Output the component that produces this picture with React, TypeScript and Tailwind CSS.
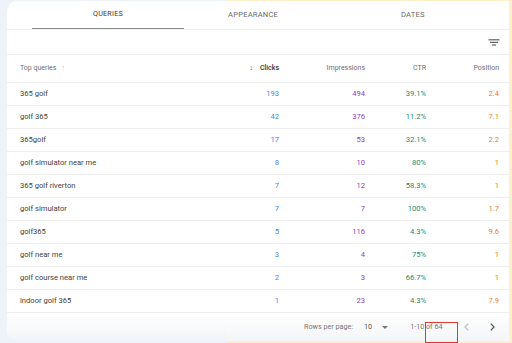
import React from 'react';

interface QueryRow {
  query: string;
  clicks: number;
  impressions: number;
  ctr: string;
  position: string;
}

const rows: QueryRow[] = [
  { query: '365 golf', clicks: 193, impressions: 494, ctr: '39.1%', position: '2.4' },
  { query: 'golf 365', clicks: 42, impressions: 376, ctr: '11.2%', position: '7.1' },
  { query: '365golf', clicks: 17, impressions: 53, ctr: '32.1%', position: '2.2' },
  { query: 'golf simulator near me', clicks: 8, impressions: 10, ctr: '80%', position: '1' },
  { query: '365 golf riverton', clicks: 7, impressions: 12, ctr: '58.3%', position: '1' },
  { query: 'golf simulator', clicks: 7, impressions: 7, ctr: '100%', position: '1.7' },
  { query: 'golf365', clicks: 5, impressions: 116, ctr: '4.3%', position: '9.6' },
  { query: 'golf near me', clicks: 3, impressions: 4, ctr: '75%', position: '1' },
  { query: 'golf course near me', clicks: 2, impressions: 3, ctr: '66.7%', position: '1' },
  { query: 'indoor golf 365', clicks: 1, impressions: 23, ctr: '4.3%', position: '7.9' },
];

const gridCols = 'grid grid-cols-[52px_86px_61px_73px] items-center';

const FilterIcon = () => (
  <svg width="12" height="7" viewBox="0 0 12 7" fill="none" stroke="#5f6368" strokeWidth="1.2">
    <line x1="0.5" y1="0.8" x2="11.5" y2="0.8" />
    <line x1="2" y1="3.4" x2="10" y2="3.4" />
    <line x1="4" y1="6" x2="8" y2="6" />
  </svg>
);

const Chevron = ({ dir, color }: { dir: 'left' | 'right'; color: string }) => (
  <svg width="5" height="8" viewBox="0 0 5 8" fill="none" stroke={color} strokeWidth="1.3">
    {dir === 'left' ? <polyline points="4.2,0.6 1,4 4.2,7.4" /> : <polyline points="0.8,0.6 4,4 0.8,7.4" />}
  </svg>
);

const QueriesPanel = () => (
  <div className="flex w-[227px] flex-col bg-[#eef2f9] pb-[3px] pl-[7px] pt-[1px]">
    <div className="flex flex-1 flex-col overflow-hidden rounded-l-[10px] bg-white">
      <div className="flex h-[29px] border-b border-[#efefef] pl-[25px]">
        <div className="flex w-[152px] items-center justify-center border-b border-[#8a8a8a] text-[7.2px] tracking-[0.2px] text-[#3c3c3c]">
          QUERIES
        </div>
      </div>
      <div className="h-[25px] border-b border-[#efefef]" />
      <div className="flex h-[28px] items-center gap-[5px] border-b border-[#efefef] pl-[13px] text-[7px] text-[#6f6f6f]">
        <span>Top queries</span>
        <span className="text-[7px] text-[#c4c4c4]">↑</span>
      </div>
      {rows.map((row) => (
        <div key={row.query} className="flex h-[23px] items-center border-b border-[#efefef] pl-[13px] text-[7.6px] text-[#3f3f3f]">
          {row.query}
        </div>
      ))}
      <div className="flex-1 bg-gradient-to-b from-white to-[#f3f4f7]" />
    </div>
  </div>
);

const MetricsPanel = () => (
  <div className="relative flex flex-1 flex-col border-b-2 border-r-[3px] border-t border-[#fdf1c9] bg-white">
    <div className="flex h-[29px] items-center border-b border-[#efefef] text-[7.6px] tracking-[0.2px] text-[#6a6a6a]">
      <span className="w-[174px] pl-[1px]">APPEARANCE</span>
      <span>DATES</span>
    </div>
    <div className="flex h-[25px] items-center justify-end border-b border-[#efefef] pr-[9px]">
      <FilterIcon />
    </div>
    <div className={`${gridCols} h-[28px] border-b border-[#efefef] text-right text-[7px] text-[#6f6f6f]`}>
      <span className="font-medium text-[#333]">
        <span className="mr-[7px] text-[7px]">↓</span>Clicks
      </span>
      <span>Impressions</span>
      <span>CTR</span>
      <span>Position</span>
    </div>
    {rows.map((row) => (
      <div key={row.query} className={`${gridCols} h-[23px] border-b border-[#efefef] text-right text-[7.6px]`}>
        <span className="text-[#4a86e8]">{row.clicks}</span>
        <span className="text-[#8e3fbf]">{row.impressions}</span>
        <span className="text-[#1f8a70]">{row.ctr}</span>
        <span className="text-[#e8812a]">{row.position}</span>
      </div>
    ))}
    <div className="flex flex-1 items-center bg-gradient-to-b from-white to-[#f4f5f7] pl-[77px] text-[7.2px] text-[#757575]">
      <span>Rows per page:</span>
      <span className="ml-[11px] text-[#555]">10</span>
      <svg className="ml-[10px]" width="6" height="3" viewBox="0 0 6 3">
        <polygon points="0,0 6,0 3,3" fill="#777" />
      </svg>
      <span className="ml-[22px]">1-10 of 64</span>
      <span className="ml-[22px]">
        <Chevron dir="left" color="#c2c2c2" />
      </span>
      <span className="ml-[21px]">
        <Chevron dir="right" color="#5a5a5a" />
      </span>
    </div>
    <div className="absolute left-[198px] top-[321px] h-[21px] w-[33px] border border-[#e53935]" />
  </div>
);

export default function App() {
  return (
    <div className="flex h-[343px] w-[512px] bg-white font-['Roboto',sans-serif]">
      <QueriesPanel />
      <MetricsPanel />
    </div>
  );
}
